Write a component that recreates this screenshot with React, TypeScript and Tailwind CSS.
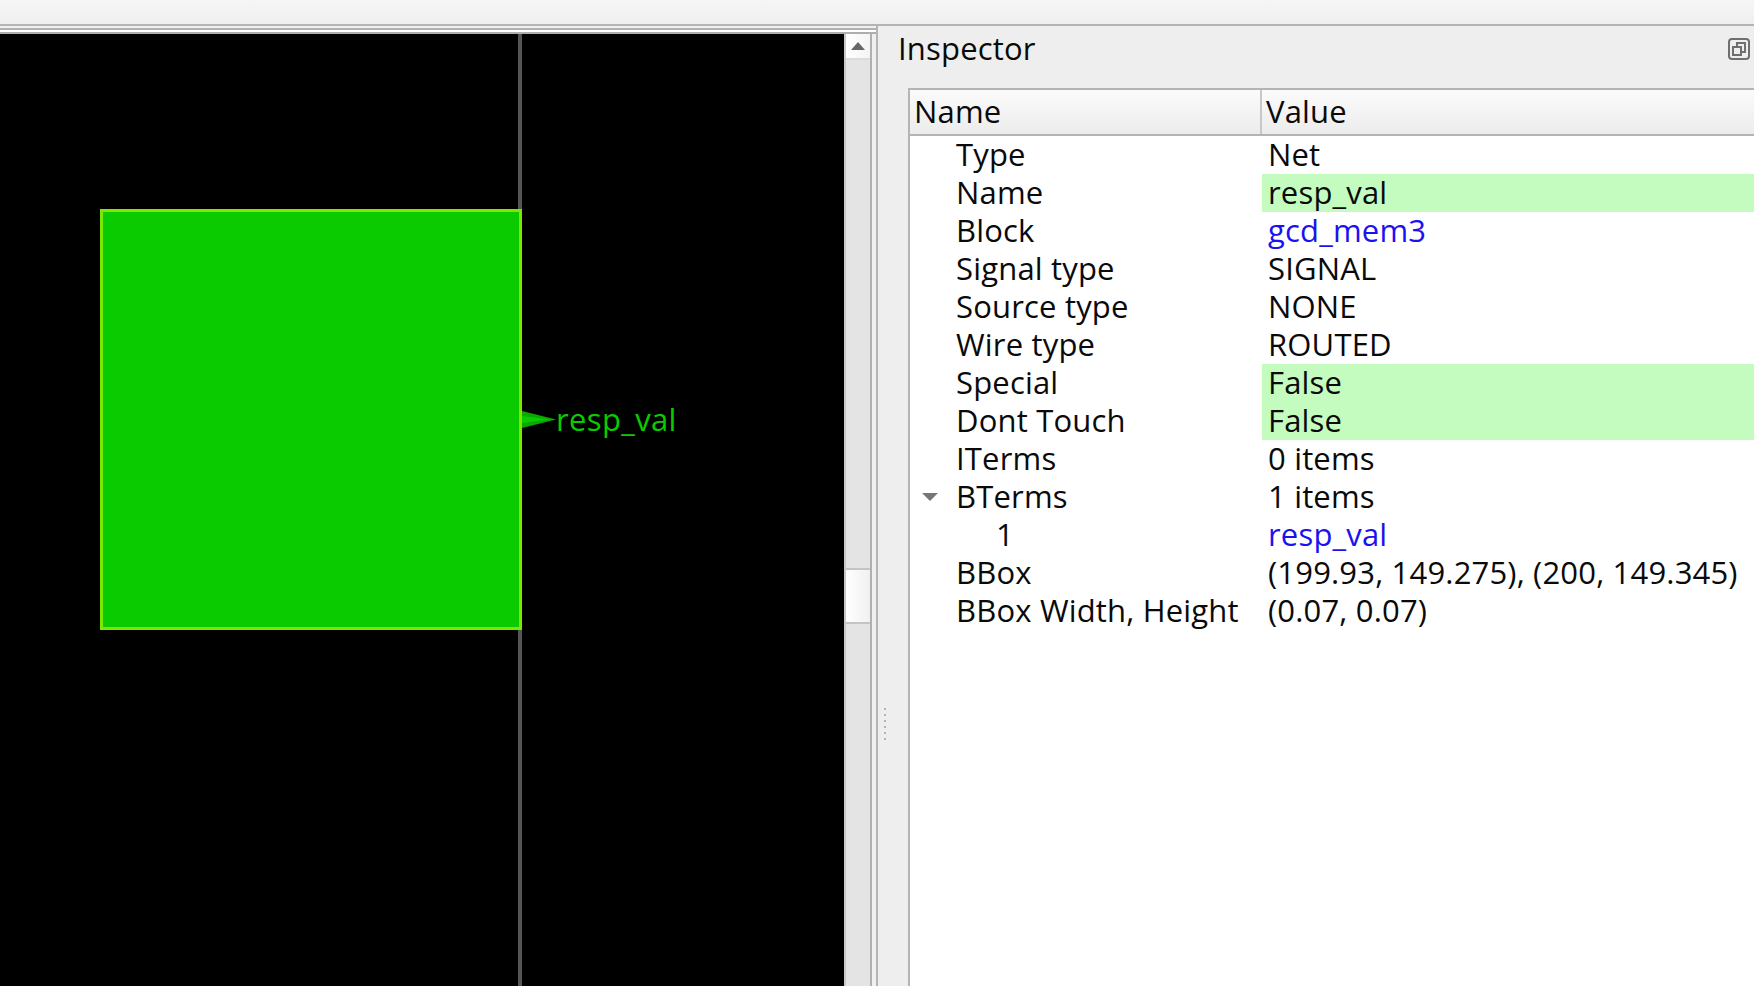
const rows: { n: string; v: string; hl?: boolean; link?: boolean; indent?: boolean; open?: boolean }[] = [
  { n: "Type", v: "Net" },
  { n: "Name", v: "resp_val", hl: true },
  { n: "Block", v: "gcd_mem3", link: true },
  { n: "Signal type", v: "SIGNAL" },
  { n: "Source type", v: "NONE" },
  { n: "Wire type", v: "ROUTED" },
  { n: "Special", v: "False", hl: true },
  { n: "Dont Touch", v: "False", hl: true },
  { n: "ITerms", v: "0 items" },
  { n: "BTerms", v: "1 items", open: true },
  { n: "1", v: "resp_val", link: true, indent: true },
  { n: "BBox", v: "(199.93, 149.275), (200, 149.345)" },
  { n: "BBox Width, Height", v: "(0.07, 0.07)" },
];

export default function App() {
  return (
    <div className="w-[1754px] h-[986px] overflow-hidden flex flex-col bg-[#eeeeee] text-[31px] tracking-[0.18px] leading-[38px] text-[#0a0a0a] font-['Open_Sans','Noto_Sans',sans-serif]">
      <div className="h-[24px] shrink-0 bg-gradient-to-b from-[#f6f6f6] to-[#efefef]" />
      <div className="h-[2px] shrink-0 bg-[#b4b4b4]" />
      <div className="flex-1 min-h-0 flex">
        {/* Layout pane */}
        <div className="w-[878px] shrink-0 flex flex-col pt-[2px] border-r-2 border-[#b4b4b4] bg-[#f0f0f0]">
          <div className="h-[2px] shrink-0 bg-[#b0b0b0]" />
          <div className="h-[2px] shrink-0 bg-white" />
          <div className="h-[2px] shrink-0 bg-[#aeaeae]" />
          <div className="flex-1 min-h-0 flex pr-[2px]">
            <div className="relative w-[846px] shrink-0 bg-black border-r-2 border-[#c8c8c8]">
              <div className="absolute left-[518px] top-0 bottom-0 w-[4px] bg-[#555555]" />
              <div className="absolute left-[100px] top-[175px] w-[422px] h-[421px] bg-[#0acb00] border-[3px] border-[#7ce800]" />
              <svg className="absolute left-[522px] top-[376px]" width="34" height="20" viewBox="0 0 34 20">
                <path d="M0 1 L34 9.5 L0 18 Z" fill="#0aa800" />
                <path d="M0 6 L28 9.5 L0 13 Z" fill="#0acb00" />
              </svg>
              <span className="absolute left-[556px] top-[366px] text-[#0acb00] leading-[38px] tracking-[0.35px]">resp_val</span>
            </div>
            <div className="w-[26px] shrink-0 flex flex-col bg-[#e4e4e4] border-r-2 border-[#b0b0b0]">
              <div className="h-[26px] shrink-0 bg-gradient-to-r from-white to-[#f4f4f4] border-b-2 border-[#dcdcdc] flex items-center justify-center">
                <svg width="16" height="9" viewBox="0 0 16 9">
                  <path d="M8 0 L15 8 L1 8 Z" fill="#666666" />
                </svg>
              </div>
              <div className="h-[508px] shrink-0" />
              <div className="h-[56px] shrink-0 bg-gradient-to-r from-white to-[#f0f0f0] border-y-2 border-[#c4c4c4]" />
            </div>
            <div className="w-[2px] shrink-0 bg-[#f0f0f0]" />
          </div>
        </div>
        {/* Inspector pane */}
        <div className="flex-1 min-w-0 flex flex-col">
          <div className="h-[62px] shrink-0 flex items-start justify-between pl-[20px] pr-[4px]">
            <span className="mt-[3px]">Inspector</span>
            <svg className="mt-[12px]" width="22" height="22" viewBox="0 0 22 22" fill="none" stroke="#6f6f6f" strokeWidth="2">
              <rect x="1" y="1" width="20" height="20" rx="3" />
              <rect x="9" y="5" width="8" height="9" />
              <rect x="5" y="9" width="8" height="8" fill="#eeeeee" />
            </svg>
          </div>
          <div className="flex-1 min-h-0 ml-[30px] flex flex-col bg-white border-l-2 border-[#b4b4b4]">
            <div className="h-[48px] shrink-0 flex border-y-2 border-[#b4b4b4] bg-gradient-to-b from-[#fbfbfb] to-[#ececec]">
              <div className="w-[352px] shrink-0 pl-[4px] pt-[2px] border-r-2 border-[#c8c8c8]">Name</div>
              <div className="flex-1 pl-[4px] pt-[2px]">Value</div>
            </div>
            {rows.map((r) => (
              <div key={r.n} className="h-[38px] shrink-0 flex whitespace-nowrap leading-[36px]">
                <div className="relative w-[352px] shrink-0 pl-[46px]">
                  {r.open && (
                    <svg className="absolute left-[12px] top-[15px]" width="16" height="8" viewBox="0 0 16 8">
                      <path d="M0 0 H16 L8 8 Z" fill="#777777" />
                    </svg>
                  )}
                  <span className={r.indent ? "pl-[40px]" : ""}>{r.n}</span>
                </div>
                <div className={`flex-1 pl-[6px] ${r.hl ? "bg-[#c3fcbe]" : ""} ${r.link ? "text-[#1a12f0]" : ""}`}>{r.v}</div>
              </div>
            ))}
          </div>
        </div>
      </div>
      <div className="absolute left-[884px] top-[708px] flex flex-col gap-[4px]">
        {[0, 1, 2, 3, 4, 5].map((i) => (
          <div key={i} className="w-[2px] h-[2px] bg-[#b4b4b4]" />
        ))}
      </div>
    </div>
  );
}
